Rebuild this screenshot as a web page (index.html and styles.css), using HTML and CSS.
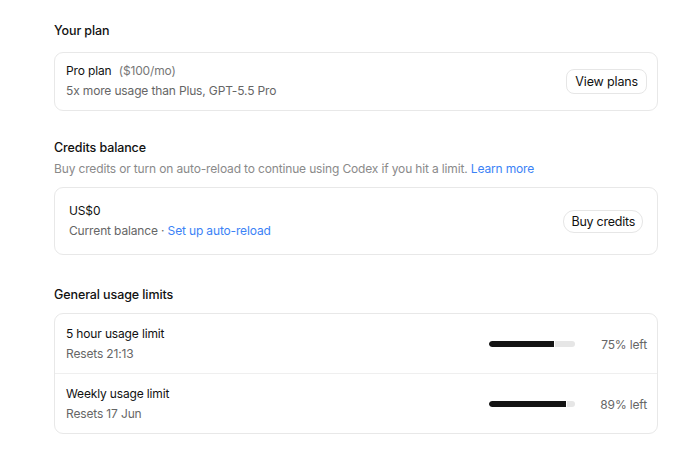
FILE: index.html
```html
<!DOCTYPE html>
<html lang="en">
<head>
    <meta charset="UTF-8">
    <meta name="viewport" content="width=device-width, initial-scale=1.0">
    <title>Usage settings</title>
    <link rel="stylesheet" href="styles.css">
</head>
<body>
    <div class="page">
        <section class="section">
            <h2 class="section-title">Your plan</h2>
            <div class="card plan-card">
                <div class="row">
                    <div class="row-text">
                        <div class="row-title">Pro plan <span class="muted price">($100/mo)</span></div>
                        <div class="row-sub">5x more usage than Plus, GPT-5.5 Pro</div>
                    </div>
                    <button class="btn">View plans</button>
                </div>
            </div>
        </section>

        <section class="section credits">
            <h2 class="section-title">Credits balance</h2>
            <p class="section-desc">Buy credits or turn on auto-reload to continue using Codex if you hit a limit. <a href="#">Learn more</a></p>
            <div class="card credits-card">
                <div class="row">
                    <div class="row-text">
                        <div class="row-title">US$0</div>
                        <div class="row-sub">Current balance · <a href="#">Set up auto-reload</a></div>
                    </div>
                    <button class="btn btn-pill">Buy credits</button>
                </div>
            </div>
        </section>

        <section class="section">
            <h2 class="section-title">General usage limits</h2>
            <div class="card">
                <div class="row limit-row">
                    <div class="row-text">
                        <div class="row-title">5 hour usage limit</div>
                        <div class="row-sub">Resets 21:13</div>
                    </div>
                    <div class="meter">
                        <div class="bar"><div class="bar-fill" style="width: 75%"></div></div>
                        <span class="meter-label">75% left</span>
                    </div>
                </div>
                <div class="row limit-row">
                    <div class="row-text">
                        <div class="row-title">Weekly usage limit</div>
                        <div class="row-sub">Resets 17 Jun</div>
                    </div>
                    <div class="meter">
                        <div class="bar"><div class="bar-fill" style="width: 89%"></div></div>
                        <span class="meter-label">89% left</span>
                    </div>
                </div>
            </div>
        </section>
    </div>
</body>
</html>
```

FILE: styles.css
```css
body {
    margin: 0;
    background-color: #fff;
    font-family: Inter, "Noto Sans", Arial, sans-serif;
    font-size: 12px;
    letter-spacing: -0.15px;
    color: #111;
    -webkit-font-smoothing: antialiased;
}
.page {
    width: 604px;
    padding: 22px 0 0 54px;
}
.section {
    margin-bottom: 28px;
}
.section.credits {
    margin-bottom: 31px;
}
.section-title {
    margin: 0 0 12px;
    font-size: 12.5px;
    font-weight: 500;
    line-height: 18px;
    letter-spacing: -0.1px;
}
.credits .section-title {
    margin-bottom: 3px;
}
.section-desc {
    margin: 0 0 9px;
    line-height: 18px;
    color: #8a8a8a;
}
.section:last-child .section-title {
    margin-bottom: 9px;
}
a {
    color: #3b82f6;
    text-decoration: none;
}
.card {
    border: 1px solid #e8e8e8;
    border-radius: 9px;
}
.row {
    display: flex;
    align-items: center;
    justify-content: space-between;
    padding: 8px 10px 9px 11px;
}
.credits-card .row {
    padding: 13px 14px 13px 14px;
}
.limit-row {
    padding: 10px 10px 9px 11px;
}
.limit-row + .limit-row {
    border-top: 1px solid #efefef;
}
.row-title {
    line-height: 20px;
}
.price {
    margin-left: 4px;
}
.row-sub {
    line-height: 20px;
    color: #666;
}
.muted {
    color: #777;
}
.btn {
    font: inherit;
    font-size: 12.5px;
    letter-spacing: -0.15px;
    color: #111;
    background: #fff;
    border: 1px solid #e6e6e6;
    border-radius: 8px;
    padding: 4px 8px;
    line-height: 15px;
}
.btn-pill {
    border-radius: 11px;
    padding: 3px 7px;
    letter-spacing: -0.25px;
}
.meter {
    display: flex;
    align-items: center;
}
.bar {
    width: 86px;
    height: 6px;
    border-radius: 3px;
    background-color: #e6e6e6;
    overflow: hidden;
}
.bar-fill {
    height: 100%;
    background-color: #141414;
    border-radius: 3px 0 0 3px;
    box-shadow: 1px 0 0 #fff;
}
.meter-label {
    width: 72px;
    text-align: right;
    color: #666;
}
```
